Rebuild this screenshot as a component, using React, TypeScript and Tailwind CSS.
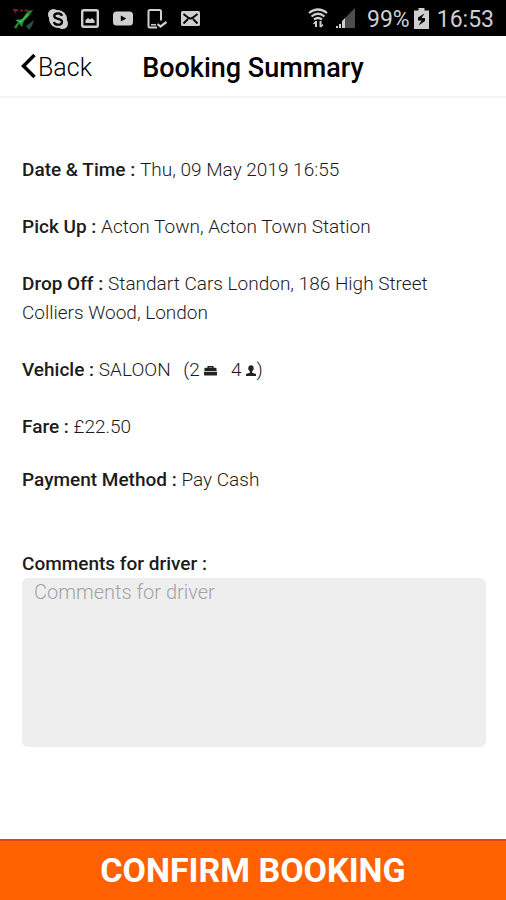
import { useState } from "react";

type Detail = {
  label: string;
  value: React.ReactNode;
};

// ---------------- Status bar icons ----------------
function TaxiAppIcon() {
  return (
    <svg width="23" height="24" viewBox="0 0 23 24" fill="none">
      <path d="M1 3h5M3.500 3v3M8 3.500h3M12.500 3.500h4" stroke="#7d1a1a" strokeWidth="2" />
      <path d="M2 20L6 15L3 13L10 12L16 4L21 3L17 9L12 14L10 20L7 17L4 22Z" fill="#208a30" />
      <path d="M5 13.500l4 1M8 16l8-9" stroke="#4fc458" strokeWidth="1.200" />
      <path d="M14 19l8-6-2 6-3 4z" fill="#2c5144" />
    </svg>
  );
}

function SkypeIcon() {
  return (
    <svg width="22" height="22" viewBox="0 0 22 22">
      <circle cx="11" cy="11" r="9" fill="#cfcfcf" />
      <circle cx="6.500" cy="6.500" r="5.500" fill="#cfcfcf" />
      <circle cx="15.500" cy="15.500" r="5.500" fill="#cfcfcf" />
      <path
        d="M15 7.800C14.400 6 12.800 5.300 11 5.300C8.800 5.300 7.200 6.300 7.200 8C7.200 12 15 9.700 15 13.700C15 15.600 13.300 16.700 11 16.700C8.900 16.700 7.300 15.800 6.900 14"
        fill="none"
        stroke="#000"
        strokeWidth="2.300"
      />
    </svg>
  );
}

function GalleryIcon() {
  return (
    <svg width="18" height="19" viewBox="0 0 18 19">
      <rect x="1.200" y="1.200" width="15.600" height="16.600" rx="1.500" fill="none" stroke="#cfcfcf" strokeWidth="2.400" />
      <path d="M4.500 14V11l2.500-2 2 1.500 2-1.500 2.500 2.500V14z" fill="#cfcfcf" />
    </svg>
  );
}

function VideoIcon() {
  return (
    <svg width="20" height="15" viewBox="0 0 20 15">
      <rect width="20" height="14" y=".5" rx="3.500" fill="#cfcfcf" />
      <path d="M7.800 4.500v6l5.500-3z" fill="#000" />
    </svg>
  );
}

function PhoneCheckIcon() {
  return (
    <svg width="20" height="20" viewBox="0 0 20 20" fill="none" stroke="#cfcfcf">
      <path d="M14 11.500V2.500Q14 1 12.500 1H3Q1.500 1 1.500 2.500V17Q1.500 18.500 3 18.500H10" strokeWidth="2" />
      <path d="M4 15.800h5" strokeWidth="1.500" />
      <path d="M10.500 15l3 2.500L19.500 13" strokeWidth="2.200" />
    </svg>
  );
}

function MailIcon() {
  return (
    <svg width="19" height="15" viewBox="0 0 19 15">
      <rect width="19" height="15" rx="1.500" fill="#cfcfcf" />
      <path d="M2.500 3L7 6.500Q9.500 8.500 12 6.500L16.500 3M2.500 12.500L7 8M16.500 12.500L12 8" fill="none" stroke="#000" strokeWidth="1.800" />
    </svg>
  );
}

function WifiIcon() {
  return (
    <svg width="20" height="20" viewBox="0 0 20 20" fill="none" stroke="#cfcfcf">
      <path d="M1 5Q10-2 19 5M3.500 8.500Q10 3 16.500 8.500M6 11.500Q10 8.500 14 11.500" strokeWidth="2.200" />
      <path d="M8 19v-6M12.500 13v6" strokeWidth="2" />
      <path d="M5.500 16L8 13.500M15 16.500L12.500 19" strokeWidth="1.500" />
    </svg>
  );
}

function SignalIcon() {
  return (
    <svg width="19" height="20" viewBox="0 0 19 20">
      <path d="M19 0v20H9V10z" fill="#4d4d4d" />
      <path d="M0 18h2v2H0zM3 16h2v4H3zM6 13l3-3v10H6z" fill="#cfcfcf" />
    </svg>
  );
}

function BatteryIcon() {
  return (
    <svg width="15" height="21" viewBox="0 0 15 21">
      <path d="M0 2.500h4.500V0h6v2.500H15V21H0z" fill="#cfcfcf" />
      <path d="M10.500 5.500L4 9.500V12.500H7.500L4.500 17.500L11 13V10H7.500z" fill="#000" />
    </svg>
  );
}

function BriefcaseIcon() {
  return (
    <svg width="13" height="11" viewBox="0 0 14 11" className="ml-1 inline align-baseline" aria-label="bags">
      <path d="M4.500 3V1.500h5V3" fill="none" stroke="#222" strokeWidth="1.500" />
      <path d="M1.500 2.500h11q1 0 1 1V6H.5V3.500q0-1 1-1zM0 6.800h14v3.200q0 1-1 1H1q-1 0-1-1z" fill="#222" />
    </svg>
  );
}

function PersonIcon() {
  return (
    <svg width="10" height="11" viewBox="0 0 10 11" className="ml-1 inline align-baseline" aria-label="passengers">
      <ellipse cx="5" cy="3.200" rx="2.700" ry="3" fill="#222" />
      <path d="M3.800 5h2.400v2.800L10 9v2H0V9l3.800-1.200z" fill="#222" />
    </svg>
  );
}

const details: Detail[] = [
  { label: "Date & Time", value: "Thu, 09 May 2019 16:55" },
  { label: "Pick Up", value: "Acton Town, Acton Town Station" },
  {
    label: "Drop Off",
    value: "Standart Cars London, 186 High Street Colliers Wood, London",
  },
  {
    label: "Vehicle",
    value: (
      <>
        SALOON <span className="ml-2">(2</span>
        <BriefcaseIcon />
        <span className="mr-px ml-3.5">4</span>
        <PersonIcon />)
      </>
    ),
  },
  { label: "Fare", value: "£22.50" },
  { label: "Payment Method", value: "Pay Cash" },
];

export default function App() {
  const [comments, setComments] = useState("");

  return (
    <div className="flex min-h-screen flex-col bg-white font-['Roboto',sans-serif] text-[#1c1c1c]">
      {/* Status bar */}
      <div className="flex h-9 items-center justify-between bg-black px-3 text-[23px] text-[#cfcfcf]">
        <div className="flex items-center gap-3 pt-px">
          <TaxiAppIcon />
          <SkypeIcon />
          <div className="flex items-center gap-3.5">
            <GalleryIcon />
            <VideoIcon />
            <PhoneCheckIcon />
            <MailIcon />
          </div>
        </div>
        <div className="flex items-center">
          <WifiIcon />
          <span className="ml-2">
            <SignalIcon />
          </span>
          <span className="ml-3 pt-1">99%</span>
          <span className="ml-1">
            <BatteryIcon />
          </span>
          <span className="ml-2 pt-1">16:53</span>
        </div>
      </div>

      {/* Header */}
      <header className="grid grid-cols-[1fr_auto_1fr] items-center border-b-2 border-[#f4f4f4] px-5 pt-1 text-black">
        <button type="button" className="flex items-center text-[25px] leading-14 font-light">
          <svg width="16" height="26" viewBox="0 0 16 26" fill="none" stroke="#000" strokeWidth="3.500" className="mr-0.5 mb-1">
            <path d="M14.500 2L3.500 13L14.500 24" />
          </svg>
          Back
        </button>
        <h1 className="text-[27px] leading-14 font-medium">Booking Summary</h1>
      </header>

      {/* Booking details */}
      <main className="flex-1 pt-[57px] pr-5 pl-[22px] text-[19px] leading-[29px]">
        <dl className="flex flex-col gap-7">
          {details.map(d => (
            <div key={d.label} className="last:-mt-1">
              <dt className="inline font-medium">{d.label} : </dt>
              <dd className="inline font-light">{d.value}</dd>
            </div>
          ))}
        </dl>

        <label htmlFor="comments" className="mt-14 block leading-7 font-medium">
          Comments for driver :
        </label>
        <textarea
          id="comments"
          value={comments}
          onChange={e => setComments(e.target.value)}
          placeholder="Comments for driver"
          className="mb-6 block h-[169px] w-full resize-none rounded-md bg-[#eeeeee] px-3 text-xl leading-7 font-light outline-none placeholder:text-[#a3a3a3]"
        />
      </main>

      {/* Confirm */}
      <button
        type="button"
        className="w-full border-t-2 border-[#d9480f] bg-[#ff6000] text-[34px] leading-[59px] font-bold text-white"
      >
        CONFIRM BOOKING
      </button>
    </div>
  );
}
